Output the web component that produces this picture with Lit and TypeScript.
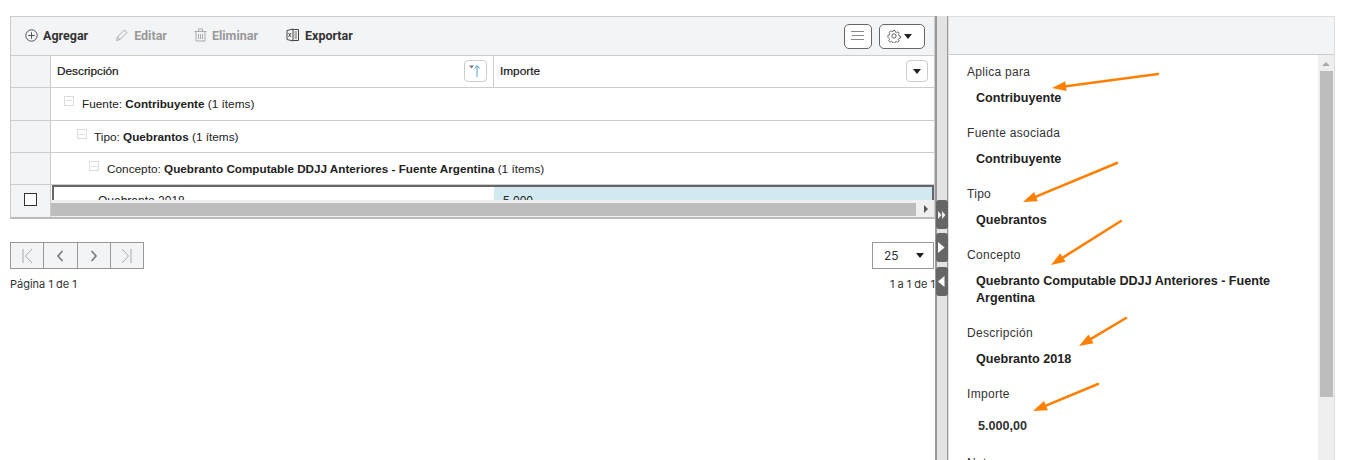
import { LitElement, html, css, svg } from "lit";
import { customElement } from "lit/decorators.js";

const arrows = [
  [1158, 74, 1052, 88],
  [1117, 163, 1023, 202],
  [1121, 221, 1051, 265],
  [1126, 318, 1079, 346],
  [1098, 384, 1033, 411],
];

function arrowShape(x1: number, y1: number, x2: number, y2: number) {
  const dx = x2 - x1, dy = y2 - y1;
  const l = Math.hypot(dx, dy);
  const ux = dx / l, uy = dy / l;
  const bx = x2 - ux * 14, by = y2 - uy * 14;
  const nx = -uy, ny = ux;
  return svg`<line x1=${x1} y1=${y1} x2=${bx} y2=${by} stroke="#ff8000" stroke-width="2.6" stroke-linecap="round"></line>
  <polygon fill="#ff8000" points="${x2},${y2} ${bx + nx * 5},${by + ny * 5} ${bx - nx * 5},${by - ny * 5}"></polygon>`;
}

@customElement("app-root")
export class AppRoot extends LitElement {
  static styles = css`
    :host { display: block; position: relative; width: 1352px; height: 460px; overflow: hidden; background: #fff; font-family: "Liberation Sans", Arial, sans-serif; font-size: 12px; color: #222; }
    .page { display: flex; padding: 16px 0 0 10px; height: 444px; }
    .left { width: 925px; flex: none; }
    .grid { border: 1px solid #ccc; border-bottom: 2px solid #bbb; height: 203px; box-sizing: border-box; display: flex; flex-direction: column; overflow: hidden; position: relative; }
    .toolbar { height: 38px; flex: none; background: #f3f4f6; border-bottom: 1px solid #ccc; display: flex; align-items: center; padding: 0 9px 0 14px; font-family: "Roboto", "Liberation Sans", sans-serif; font-weight: 700; font-size: 12.5px; color: #333; }
    .tool { display: flex; align-items: center; gap: 5px; margin: 0 27px 2px 0; }
    .tool.off { color: #999; }
    .tool svg { display: block; }
    .tool svg.wide { margin-right: 1px; }
    .spacer { flex: 1; }
    .tbtn { height: 25px; box-sizing: border-box; border: 1px solid #666; border-radius: 5px; background: #fff; display: flex; align-items: center; justify-content: center; }
    .tbtn.menu { width: 28px; margin-right: 7px; }
    .tbtn.gear { width: 46px; gap: 3px; justify-content: flex-start; padding-left: 7px; }
    .tri { width: 0; height: 0; border-left: 4.5px solid transparent; border-right: 4.5px solid transparent; border-top: 5px solid #222; }
    .row { display: grid; grid-template-columns: 40px 443px 1fr; flex: none; border-bottom: 1px solid #ccc; box-sizing: border-box; }
    .row > div { box-sizing: border-box; }
    .rail { background: #f3f4f6; border-right: 1px solid #ccc; display: flex; align-items: center; justify-content: center; }
    .head { height: 32px; font-size: 11.8px; -webkit-text-stroke: 0.2px #222; color: #111; }
    .hcell { display: flex; align-items: center; justify-content: space-between; padding: 0 6px 1px; }
    .hcell.desc { border-right: 1px solid #ccc; }
    .hbtn { width: 23px; height: 22px; box-sizing: border-box; border: 1px solid #ccc; border-radius: 4px; background: #fff; display: flex; align-items: center; justify-content: center; -webkit-text-stroke: 0; }
    .hbtn.small { width: 22px; }
    .group { grid-template-columns: 40px 1fr; font-size: 11.8px; color: #222; }
    .group.g1 { height: 33px; }
    .group.g2, .group.g3 { height: 32px; }
    .gcell { display: flex; align-items: center; }
    .g1 .gcell { padding-left: 13px; padding-bottom: 1px; }
    .g2 .gcell { padding-left: 26px; padding-top: 1px; }
    .g3 .gcell { padding-left: 38px; padding-top: 1px; }
    .minus { width: 10px; height: 10px; border: 1px solid #dcdcdc; box-sizing: border-box; position: relative; top: -3px; margin-right: 8px; flex: none; display: flex; align-items: center; justify-content: center; }
    .g2 .minus { margin-right: 7px; }
    .minus::after { content: ""; width: 6px; height: 1px; background: #dcdcdc; }
    .group b { font-weight: 700; font-size: 11.7px; }
    .data { flex: 1; min-height: 0; display: grid; grid-template-columns: 40px 443px 1fr; position: relative; overflow: hidden; }
    .check { width: 13px; height: 13px; border: 1px solid #333; box-sizing: border-box; background: #fff; margin-bottom: 4px; }
    .railbig { background: #f3f4f6; border-right: 1px solid #ccc; display: flex; align-items: center; justify-content: center; }
    .sel { border: 2px solid #666; border-bottom: 0; border-right: 0; margin-left: 1px; padding: 7px 0 0 44px; font-size: 12px; line-height: 14px; overflow: hidden; }
    .imp { background: #d3e9f1; border-top: 2px solid #666; border-right: 2px solid #666; padding: 7px 0 0 9px; line-height: 14px; overflow: hidden; }
    .hscroll { position: absolute; left: 40px; right: 0; bottom: 0; height: 17px; background: #f0f0f0; display: flex; align-items: center; box-sizing: border-box; padding: 1px 0 0; }
    .hthumb { width: 865px; height: 13px; background: #bdbdbd; }
    .harrow { margin-left: 8px; width: 0; height: 0; border-top: 4px solid transparent; border-bottom: 4px solid transparent; border-left: 4px solid #555; }
    .pager { display: flex; justify-content: space-between; margin-top: 23px; }
    .pbtns { display: flex; border: 1px solid #999; height: 25px; width: 132px; background: #f3f4f6; }
    .pbtn { flex: 1; border-right: 1px solid #999; display: flex; align-items: center; justify-content: center; }
    .pbtn:last-child { border-right: 0; }
    .size { width: 40px; height: 25px; border: 1px solid #999; display: flex; align-items: center; justify-content: space-between; padding: 0 9px 0 11px; margin-right: 1px; font-family: "Inter", sans-serif; color: #333; font-size: 12px; }
    .info { display: flex; justify-content: space-between; margin-top: 8px; font-family: "Inter", sans-serif; font-size: 11px; color: #333; line-height: 14px; }
    .split { width: 13px; flex: none; box-sizing: border-box; background: #e3e3e3; border-left: 2px solid #999; border-right: 1px solid #999; position: relative; height: 444px; }
    .sbtn { position: absolute; left: -1px; width: 12px; background: #666; border-radius: 3px; display: flex; align-items: center; justify-content: flex-start; padding-left: 2px; box-sizing: border-box; }
    .s1 { top: 184px; height: 29px; }
    .s2 { top: 217px; height: 29px; }
    .s3 { top: 251px; height: 29px; }
    .right { width: 387px; flex: none; border: 1px solid #ddd; border-bottom: 0; box-sizing: border-box; display: flex; flex-direction: column; overflow: hidden; height: 444px; }
    .rhead { height: 37px; flex: none; background: #f3f4f6; border-bottom: 1px solid #ccc; }
    .rbody { flex: 1; min-height: 0; display: flex; overflow: hidden; }
    .fields { flex: 1; padding: 9px 0 0 18px; overflow: hidden; font-size: 12px; }
    .lbl { line-height: 16px; letter-spacing: 0.3px; color: #333; }
    .val { font-weight: 700; line-height: 17px; margin: 10px 40px 18px 9px; color: #222; font-size: 12.6px; }
    .val.num { margin: 16px 40px 20px 11px; color: #333; }
    .vscroll { width: 16px; flex: none; background: #efefef; display: flex; flex-direction: column; align-items: center; }
    .up { width: 0; height: 0; border-left: 4px solid transparent; border-right: 4px solid transparent; border-bottom: 4px solid #aaa; margin-top: 7px; flex: none; }
    .vthumb { width: 13px; height: 326px; background: #bdbdbd; margin-top: 5px; flex: none; }
    .arrows { position: absolute; left: 0; top: 0; pointer-events: none; }
  `;

  render() {
    const fields: [string, string, string?][] = [
      ["Aplica para", "Contribuyente"],
      ["Fuente asociada", "Contribuyente"],
      ["Tipo", "Quebrantos"],
      ["Concepto", "Quebranto Computable DDJJ Anteriores - Fuente Argentina"],
      ["Descripción", "Quebranto 2018"],
      ["Importe", "5.000,00", "num"],
      ["Notas", ""],
    ];
    return html`
      <div class="page">
        <div class="left">
          <div class="grid">
            <div class="toolbar">
              <div class="tool">
                <svg width="13" height="13" viewBox="0 0 13 13" fill="none" stroke="#555"><circle cx="6.500" cy="6.500" r="5.700"/><path d="M6.500 3.200v6.600M3.200 6.500h6.600"/></svg>
                Agregar
              </div>
              <div class="tool off">
                <svg width="14" height="14" viewBox="0 0 14 14" fill="none" stroke="#aaa"><path d="M1.500 12.500l1-3.500 7-7 2.500 2.500-7 7z"/><path d="M2.500 9l2.500 2.500"/></svg>
                Editar
              </div>
              <div class="tool off">
                <svg width="13" height="14" viewBox="0 0 13 14" fill="none" stroke="#aaa"><path d="M.5 3.500h12M4.500 3.500V1h4v2.500M2 3.500V13h9V3.500M4.500 6v5M6.500 6v5M8.500 6v5"/></svg>
                Eliminar
              </div>
              <div class="tool">
                <svg class="wide" width="14" height="14" viewBox="-1 0 14 14" fill="none" stroke="#444"><path d="M6.500 1.500h6v11h-6M1 2.500l6-1.500v12l-6-1.500z"/><path d="M8.500 4h2.500M8.500 6h2.500M8.500 8h2.500M8.500 10h2.500" stroke-width=".8"/><path d="M2.500 5l2.500 4M5 5l-2.500 4" stroke-width=".9"/></svg>
                Exportar
              </div>
              <div class="spacer"></div>
              <div class="tbtn menu">
                <svg width="14" height="10" viewBox="0 0 14 10" stroke="#888"><path d="M0 .5h13M1 4.500h12M0 8.500h13"/></svg>
              </div>
              <div class="tbtn gear">
                <svg width="14" height="14" viewBox="0 0 15 15" fill="none" stroke="#555"><circle cx="7.500" cy="7.500" r="2.300"/><path d="M6.300 1h2.400l.4 1.900 1.300.6 1.700-1 1.600 1.700-1 1.600.6 1.400 1.700.4v2.300l-1.800.4-.6 1.300 1 1.700-1.700 1.600-1.600-1-1.400.6-.4 1.600H6.300l-.4-1.700-1.400-.6-1.600 1-1.700-1.600 1-1.700-.6-1.300L.3 8.900V6.600L2 6.200l.6-1.400-1-1.600 1.700-1.700 1.600 1 1.400-.6z" transform="translate(.7 .7) scale(.91)"/></svg>
                <span class="tri"></span>
              </div>
            </div>
            <div class="row head">
              <div class="rail"></div>
              <div class="hcell desc">Descripción
                <span class="hbtn"><svg width="15" height="14" viewBox="0 0 15 14" fill="none"><path d="M1 1.500h5L3.500 4.500z" fill="#777"/><path d="M9 13V2M6.500 4.500L9 1.500l2.500 3" stroke="#4a9fd8"/></svg></span>
              </div>
              <div class="hcell">Importe<span class="hbtn small"><span class="tri"></span></span></div>
            </div>
            <div class="row group g1"><div class="rail"></div><div class="gcell"><span class="minus"></span><span>Fuente: <b>Contribuyente</b> (1 ítems)</span></div></div>
            <div class="row group g2"><div class="rail"></div><div class="gcell"><span class="minus"></span><span>Tipo: <b>Quebrantos</b> (1 ítems)</span></div></div>
            <div class="row group g3"><div class="rail"></div><div class="gcell"><span class="minus"></span><span>Concepto: <b>Quebranto Computable DDJJ Anteriores - Fuente Argentina</b> (1 ítems)</span></div></div>
            <div class="data">
              <div class="railbig"><span class="check"></span></div>
              <div class="sel">Quebranto 2018</div>
              <div class="imp">5.000</div>
              <div class="hscroll"><div class="hthumb"></div><span class="harrow"></span></div>
            </div>
          </div>
          <div class="pager">
            <div class="pbtns">
              <div class="pbtn"><svg width="12" height="16" viewBox="0 0 12 16" fill="none" stroke="#aaa"><path d="M2 1v14M11 1L4.500 8l6.500 7"/></svg></div>
              <div class="pbtn"><svg width="8" height="12" viewBox="0 0 8 12" fill="none" stroke="#777" stroke-width="1.600"><path d="M6.500 1L2 6l4.500 5"/></svg></div>
              <div class="pbtn"><svg width="8" height="12" viewBox="0 0 8 12" fill="none" stroke="#777" stroke-width="1.600"><path d="M1.500 1L6 6l-4.500 5"/></svg></div>
              <div class="pbtn"><svg width="12" height="16" viewBox="0 0 12 16" fill="none" stroke="#aaa"><path d="M10 1v14M1 1l6.500 7L1 15"/></svg></div>
            </div>
            <div class="size">25<span class="tri"></span></div>
          </div>
          <div class="info"><span>Página 1 de 1</span><span>1 a 1 de 1</span></div>
        </div>
        <div class="split">
          <div class="sbtn s1"><svg width="8" height="8" viewBox="0 0 8 8" fill="#eee"><path d="M0 0l3.500 4L0 8zM4 0l3.500 4L4 8z"/></svg></div>
          <div class="sbtn s2"><svg width="7" height="11" viewBox="0 0 7 11" fill="#fff"><path d="M0 0l6.500 5.500L0 11z"/></svg></div>
          <div class="sbtn s3"><svg width="7" height="11" viewBox="0 0 7 11" fill="#fff"><path d="M6.500 0L0 5.500 6.500 11z"/></svg></div>
        </div>
        <div class="right">
          <div class="rhead"></div>
          <div class="rbody">
            <div class="fields">
              ${fields.map(([l, v, c]) => html`<div class="lbl">${l}</div><div class="val ${c ?? ""}">${v}</div>`)}
            </div>
            <div class="vscroll"><span class="up"></span><div class="vthumb"></div></div>
          </div>
        </div>
      </div>
      <svg class="arrows" width="1352" height="460">
        ${arrows.map(([a, b, c, d]) => arrowShape(a, b, c, d))}
      </svg>
    `;
  }
}
